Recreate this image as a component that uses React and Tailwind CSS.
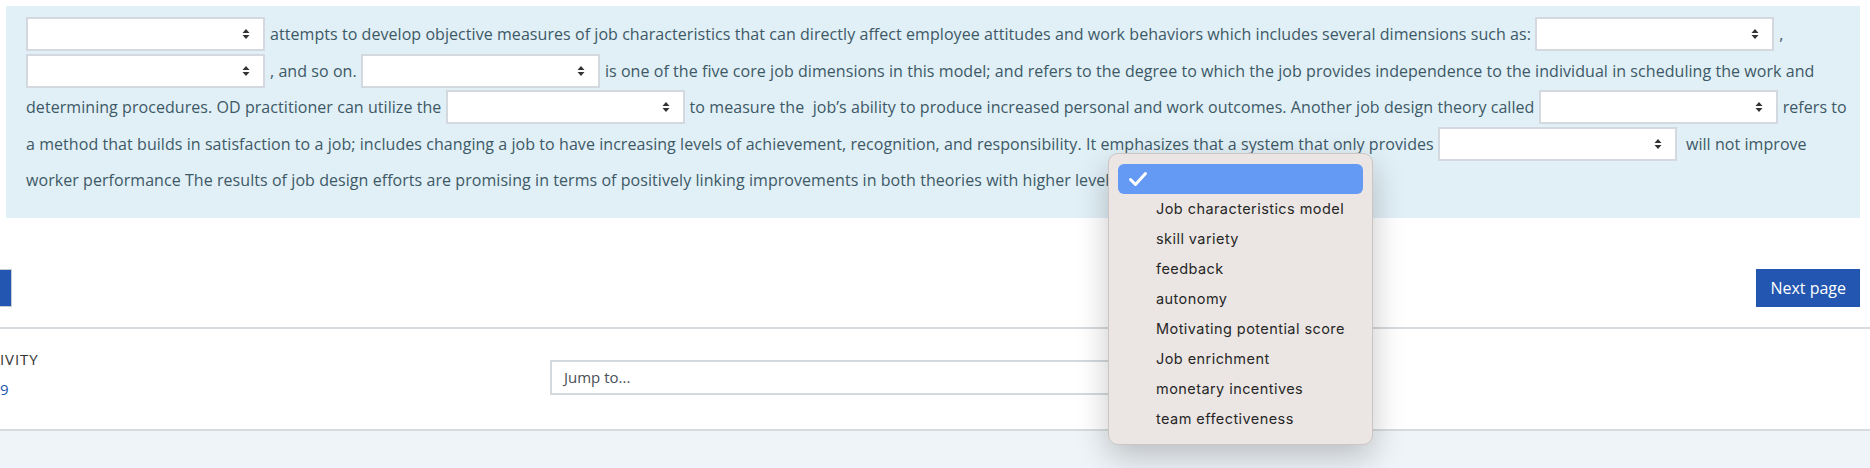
import React from "react";

const Arrows = () => (
  <svg width="8" height="12" viewBox="0 0 8 12" className="absolute right-[13px] top-1/2 -translate-y-1/2">
    <path d="M0.5 5 L4 1 L7.5 5 Z" fill="#333" />
    <path d="M0.5 7 L4 11 L7.5 7 Z" fill="#333" />
  </svg>
);

const Gap = ({ className = "" }) => (
  <span className={`relative inline-block w-[239px] h-[34px] shrink-0 bg-white border-2 border-[#d3d9de] ${className}`}>
    <Arrows />
  </span>
);

const Line = ({ children }) => (
  <div className="flex items-center h-[36.5px] whitespace-pre">{children}</div>
);

const options = [
  "Job characteristics model",
  "skill variety",
  "feedback",
  "autonomy",
  "Motivating potential score",
  "Job enrichment",
  "monetary incentives",
  "team effectiveness",
];

export default function App() {
  return (
    <div className="relative w-[1870px] h-[468px] overflow-hidden bg-white font-['Open_Sans',sans-serif]">
      {/* question text */}
      <div className="pl-[6px] pr-[10px] pt-[6px]">
        <div className="bg-[#e1eff6] pl-[20px] pt-[10px] pb-[19px] text-[16px] tracking-[0.06px] text-[#3d5966]">
          <Line>
            <Gap />
            <span className="ml-[5px]">attempts to develop objective measures of job characteristics that can directly affect employee attitudes and work behaviors which includes several dimensions such as: </span>
            <Gap />
            <span className="ml-[5px]">,</span>
          </Line>
          <Line>
            <Gap />
            <span className="ml-[5px]">, and so on. </span>
            <Gap />
            <span className="ml-[5px]">is one of the five core job dimensions in this model; and refers to the degree to which the job provides independence to the individual in scheduling the work and</span>
          </Line>
          <Line>
            <span>determining procedures. OD practitioner can utilize the </span>
            <Gap />
            <span className="ml-[5px]">to measure the  job’s ability to produce increased personal and work outcomes. Another job design theory called </span>
            <Gap />
            <span className="ml-[5px]">refers to</span>
          </Line>
          <Line>
            <span>a method that builds in satisfaction to a job; includes changing a job to have increasing levels of achievement, recognition, and responsibility. It emphasizes that a system that only provides </span>
            <Gap />
            <span className="ml-[9px]">will not improve</span>
          </Line>
          <Line>
            <span>worker performance The results of job design efforts are promising in terms of positively linking improvements in both theories with higher levels of</span>
          </Line>
        </div>
      </div>

      {/* page buttons */}
      <div className="flex items-center justify-between mt-[51px] pr-[10px]">
        <div className="w-[12px] h-[38px] bg-[#2356b0] border border-l-0 border-[#c6ccd2]" />
        <button className="h-[38px] px-[14px] bg-[#2356b0] text-white text-[16px]">Next page</button>
      </div>

      {/* activity navigation */}
      <div className="mt-[20px] border-t-2 border-b-2 border-[#d6dbdf] h-[104px] flex items-start">
        <div className="w-[550px] pt-[20px] text-[15px] leading-[20px]">
          <div className="text-[#333] tracking-[0.06em]">IVITY</div>
          <div className="mt-[10px] text-[#2356b0]">9</div>
        </div>
        <div className="mt-[31px] w-[770px] h-[35px] border-2 border-[#d3d9de] bg-white flex items-center pl-[12px] text-[15px] text-[#495057]">
          Jump to...
        </div>
      </div>
      <div className="h-[40px] bg-[#eff4f8]" />

      {/* native select popup */}
      <div className="absolute left-[1108px] top-[153px] w-[265px] rounded-[10px] bg-[#ebe6e4] border border-[#cbc6c4] shadow-[0_12px_32px_rgba(0,0,0,0.22)] px-[9px] py-[10px] font-['Inter',sans-serif] text-[14.5px] tracking-[0.03em] text-[#262626]">
        <div className="h-[30px] rounded-[6px] bg-[#6499f4] flex items-center pl-[10px]">
          <svg width="20" height="16" viewBox="0 0 20 16">
            <path d="M2.5 8.5 L7.5 13.5 L17.5 2.5" fill="none" stroke="#fff" strokeWidth="3" strokeLinecap="round" strokeLinejoin="round" />
          </svg>
        </div>
        {options.map((o) => (
          <div key={o} className="h-[30px] flex items-center pl-[38px]">
            {o}
          </div>
        ))}
      </div>
    </div>
  );
}
